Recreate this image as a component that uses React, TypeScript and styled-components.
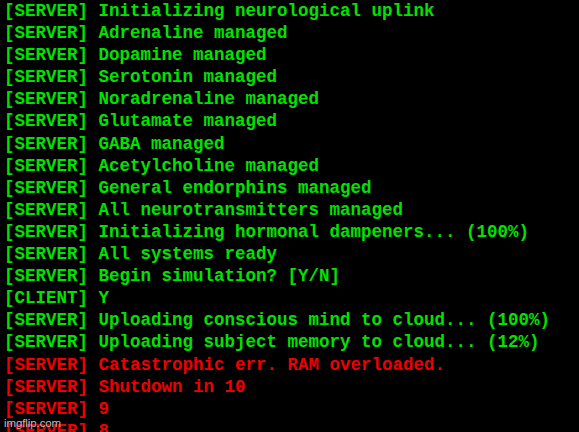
import React from "react";
import styled, { createGlobalStyle } from "styled-components";

const Global = createGlobalStyle`
  html, body { margin: 0; padding: 0; background: #000; overflow: hidden; }
  body { width: 579px; height: 432px; }
`;

const Terminal = styled.div`
  position: relative;
  width: 579px;
  height: 432px;
  background: #000;
  overflow: hidden;
  padding: 0 0 0 4px;
  box-sizing: border-box;
  display: flex;
  flex-direction: column;
`;

const Line = styled.div<{ $err?: boolean }>`
  font-family: "Courier New", "Liberation Mono", monospace;
  font-weight: bold;
  font-size: 17.5px;
  line-height: 22.1px;
  height: 22.1px;
  white-space: pre;
  color: ${(p) => (p.$err ? "#ee0000" : "#00e200")};
  flex: none;
`;

const Watermark = styled.div`
  position: absolute;
  left: 4px;
  top: 415px;
  font-family: "Liberation Sans", Arial, sans-serif;
  font-size: 11.5px;
  line-height: 16px;
  letter-spacing: -0.1px;
  color: rgba(225, 225, 225, 0.85);
  text-shadow: 0 0 1px rgba(0, 0, 0, 0.6);
`;

const lines: { t: string; err?: boolean }[] = [
  { t: "[SERVER] Initializing neurological uplink" },
  { t: "[SERVER] Adrenaline managed" },
  { t: "[SERVER] Dopamine managed" },
  { t: "[SERVER] Serotonin managed" },
  { t: "[SERVER] Noradrenaline managed" },
  { t: "[SERVER] Glutamate managed" },
  { t: "[SERVER] GABA managed" },
  { t: "[SERVER] Acetylcholine managed" },
  { t: "[SERVER] General endorphins managed" },
  { t: "[SERVER] All neurotransmitters managed" },
  { t: "[SERVER] Initializing hormonal dampeners... (100%)" },
  { t: "[SERVER] All systems ready" },
  { t: "[SERVER] Begin simulation? [Y/N]" },
  { t: "[CLIENT] Y" },
  { t: "[SERVER] Uploading conscious mind to cloud... (100%)" },
  { t: "[SERVER] Uploading subject memory to cloud... (12%)" },
  { t: "[SERVER] Catastrophic err. RAM overloaded.", err: true },
  { t: "[SERVER] Shutdown in 10", err: true },
  { t: "[SERVER] 9", err: true },
  { t: "[SERVER] 8", err: true },
];

export default function App() {
  return (
    <>
      <Global />
      <Terminal>
        {lines.map((l, i) => (
          <Line key={i} $err={l.err}>
            {l.t}
          </Line>
        ))}
        <Watermark>imgflip.com</Watermark>
      </Terminal>
    </>
  );
}
